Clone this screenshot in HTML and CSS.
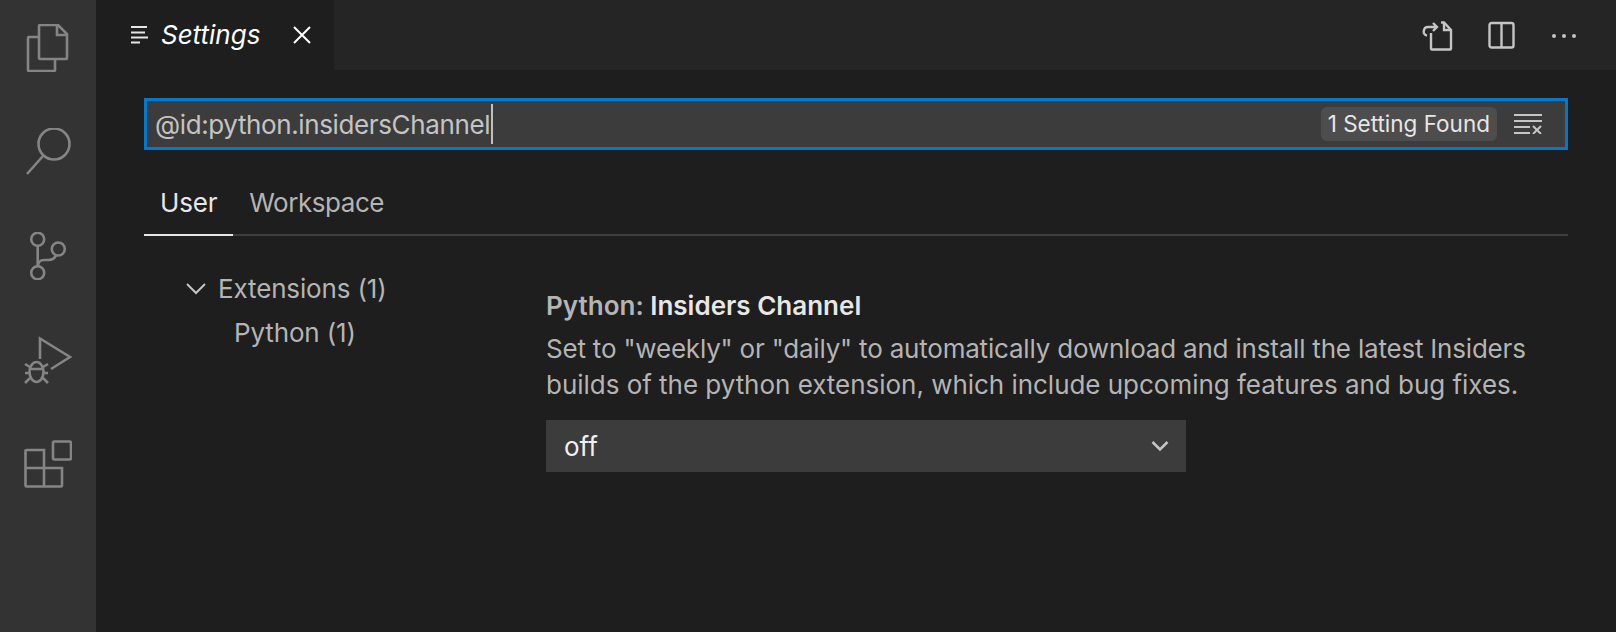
FILE: index.html
```html
<!DOCTYPE html>
<html lang="en">
<head>
    <meta charset="utf-8">
    <title>Settings</title>
    <link rel="stylesheet" href="styles.css">
</head>
<body>
    <div class="window">
        <!-- Activity Bar -->
        <nav class="activity-bar">
            <svg class="activity-icon" viewBox="0 0 48 48">
                <path d="M15 13H5a1 1 0 0 0-1 1v32a1 1 0 0 0 1 1h25a1 1 0 0 0 1-1V35"/>
                <path d="M16 1h18l9 9v24a1 1 0 0 1-1 1H16a1 1 0 0 1-1-1V2a1 1 0 0 1 1-1z"/>
                <path d="M33 1v10h10"/>
            </svg>
            <svg class="activity-icon" viewBox="0 0 48 48">
                <circle cx="30" cy="16" r="15.5"/>
                <path d="M19 28L3 46"/>
            </svg>
            <svg class="activity-icon" viewBox="0 0 48 48">
                <circle cx="13.7" cy="7.3" r="6.5"/>
                <circle cx="34.3" cy="17" r="6.5"/>
                <circle cx="13.7" cy="40.7" r="6.5"/>
                <path d="M13.7 14v20M14 34c0-3 2-6 6-6h5c3 0 5-1 7-4.500"/>
            </svg>
            <svg class="activity-icon" viewBox="0 0 48 48">
                <path d="M16 23V2.500L46 21 27 33"/>
                <ellipse cx="12.500" cy="36" rx="7" ry="10"/>
                <path d="M5.500 33h14M1 28l5 3M1 37h5M1 47l5-5M24 28l-5 3M24 37h-5M24 47l-5-5"/>
            </svg>
            <svg class="activity-icon" viewBox="0 0 48 48">
                <rect x="29" y="1.500" width="18" height="18" rx="1.500"/>
                <path d="M2.500 10H20v36.500H2.500a1 1 0 0 1-1-1V11a1 1 0 0 1 1-1zM1.500 28H38v17.500a1 1 0 0 1-1 1H20"/>
            </svg>
        </nav>

        <main class="editor">
            <!-- Tabs -->
            <header class="tab-bar">
                <div class="tab">
                    <svg class="tab-list-icon" viewBox="0 0 18 18">
                        <path d="M0 1h16M0 6.500h14M0 11.500h17M0 16.500h9"/>
                    </svg>
                    <span class="tab-title">Settings</span>
                    <svg class="tab-close" viewBox="0 0 18 18">
                        <path d="M1 1l16 16M17 1L1 17"/>
                    </svg>
                </div>
                <div class="tab-actions">
                    <svg class="action-icon" viewBox="0 0 32 32">
                        <path d="M9 14v15.500a1 1 0 0 0 1 1h18a1 1 0 0 0 1-1V11l-7-7.500h-3"/>
                        <path d="M22 3.500V11h7"/>
                        <path d="M15 8H6c-5 0-6 8-1 8.500M11 4l4 4-4 4"/>
                    </svg>
                    <svg class="action-icon" viewBox="0 0 32 32">
                        <rect x="4.500" y="4" width="24" height="24.500" rx="2"/>
                        <path d="M16.500 4v24.500"/>
                    </svg>
                    <svg class="action-icon action-dots" viewBox="0 0 32 32">
                        <circle cx="6" cy="17" r="2"/>
                        <circle cx="16" cy="17" r="2"/>
                        <circle cx="26" cy="17" r="2"/>
                    </svg>
                </div>
            </header>

            <!-- Settings Page -->
            <section class="settings">
                <div class="search-box">
                    <span class="search-text">@id:python.insidersChannel</span>
                    <span class="caret"></span>
                    <span class="count-badge">1 Setting Found</span>
                    <svg class="clear-icon" viewBox="0 0 28 20">
                        <path d="M0 1h28M0 7h28M0 13h16M0 19h16M19 12l8 8M27 12l-8 8"/>
                    </svg>
                </div>

                <div class="scope-tabs">
                    <span class="scope-tab active">User</span>
                    <span class="scope-tab">Workspace</span>
                </div>

                <div class="settings-body">
                    <div class="toc">
                        <div class="toc-group">
                            <svg class="toc-chevron" viewBox="0 0 20 12">
                                <path d="M1 1l9 9 9-9"/>
                            </svg>
                            <span>Extensions (1)</span>
                        </div>
                        <div class="toc-item">Python (1)</div>
                    </div>
                    <div class="setting">
                        <div class="setting-title">Python: <strong>Insiders Channel</strong></div>
                        <p class="setting-desc">Set to "weekly" or "daily" to automatically download and install the latest Insiders builds of the python extension, which include upcoming features and bug fixes.</p>
                        <div class="setting-select">
                            <span>off</span>
                            <svg class="select-chevron" viewBox="0 0 18 12">
                                <path d="M1.500 2L9 9.500 16.500 2"/>
                            </svg>
                        </div>
                    </div>
                </div>
            </section>
        </main>
    </div>
</body>
</html>
```

FILE: styles.css
```css
/* General Styles */
body {
    margin: 0;
    background-color: #1e1e1e;
    font-family: Inter, "Noto Sans", sans-serif;
    font-size: 26px;
    color: #b4b4b4;
}

svg {
    display: block;
    flex-shrink: 0;
    fill: none;
    stroke-width: 2;
}

.window {
    display: flex;
    height: 632px;
    overflow: hidden;
}

/* Activity Bar */
.activity-bar {
    width: 96px;
    flex-shrink: 0;
    display: flex;
    flex-direction: column;
    gap: 56px;
    padding: 24px 24px 0;
    box-sizing: border-box;
    background-color: #333333;
}

.activity-icon {
    width: 48px;
    height: 48px;
    stroke: #858585;
    stroke-width: 2.6;
}

.editor {
    flex: 1;
    min-width: 0;
}

/* Tab Bar */
.tab-bar {
    height: 70px;
    display: flex;
    justify-content: space-between;
    align-items: center;
    background-color: #252526;
}

.tab {
    width: 238px;
    height: 100%;
    box-sizing: border-box;
    display: flex;
    align-items: center;
    padding-left: 35px;
    background-color: #1e1e1e;
    color: #ffffff;
}

.tab-list-icon {
    width: 18px;
    height: 18px;
    stroke: #e6e6e6;
}

.tab-title {
    margin-left: 12px;
    width: 132px;
    font-style: italic;
    line-height: 70px;
}

.tab-close {
    width: 18px;
    height: 18px;
    stroke: #ffffff;
}

.tab-actions {
    display: flex;
    gap: 31px;
    padding-right: 36px;
}

.action-icon {
    width: 32px;
    height: 32px;
    stroke: #c5c5c5;
    stroke-width: 2.4;
}

.action-dots {
    fill: #c5c5c5;
    stroke: none;
}

/* Search */
.settings {
    padding: 28px 48px 0;
}

.search-box {
    height: 52px;
    box-sizing: border-box;
    display: flex;
    align-items: center;
    padding: 0 23px 0 8px;
    border: 3px solid #007acc;
    background-color: #3c3c3c;
    color: #c4c4c4;
}

.search-text {
    letter-spacing: -0.38px;
}

.caret {
    width: 2px;
    height: 40px;
    margin-left: 1px;
    background-color: #c0c0c0;
}

.count-badge {
    margin-left: auto;
    padding: 0 7px;
    height: 34px;
    line-height: 34px;
    border-radius: 6px;
    background-color: #4d4d4d;
    font-size: 22.5px;
    color: #e6e6e6;
}

.clear-icon {
    width: 28px;
    height: 20px;
    margin-left: 17px;
    stroke: #c5c5c5;
}

/* User / Workspace */
.scope-tabs {
    height: 86px;
    box-sizing: border-box;
    display: flex;
    align-items: flex-end;
    border-bottom: 2px solid #3f3f3f;
}

.scope-tab {
    height: 62px;
    box-sizing: border-box;
    line-height: 58px;
    padding: 0 16px;
    margin-bottom: -2px;
    border-bottom: 2px solid transparent;
    letter-spacing: -0.45px;
}

.scope-tab.active {
    color: #e7e7e7;
    border-bottom-color: #e7e7e7;
    letter-spacing: -0.2px;
}

/* Settings Body */
.settings-body {
    display: flex;
}

.toc {
    width: 402px;
    flex-shrink: 0;
    padding-top: 31px;
    line-height: 44px;
    letter-spacing: -0.15px;
}

.toc-group {
    display: flex;
    align-items: center;
    padding-left: 42px;
}

.toc-chevron {
    width: 20px;
    height: 12px;
    margin-right: 12px;
    stroke: #c5c5c5;
}

.toc-item {
    padding-left: 90px;
}

.setting {
    flex: 1;
    padding-top: 52px;
}

.setting-title {
    font-weight: 600;
    line-height: 36px;
    color: #b4b4b4;
}

.setting-title strong {
    font-weight: 600;
    color: #e7e7e7;
}

.setting-desc {
    margin: 7px 0 0;
    line-height: 36px;
    letter-spacing: -0.03px;
}

.setting-desc::first-line {
    letter-spacing: -0.2px;
}

.setting-select {
    width: 640px;
    height: 52px;
    box-sizing: border-box;
    margin-top: 17px;
    padding: 0 17px 0 18px;
    display: flex;
    justify-content: space-between;
    align-items: center;
    background-color: #3c3c3c;
    color: #f0f0f0;
}

.select-chevron {
    width: 18px;
    height: 12px;
    stroke: #c5c5c5;
    stroke-width: 2.5;
}
```
